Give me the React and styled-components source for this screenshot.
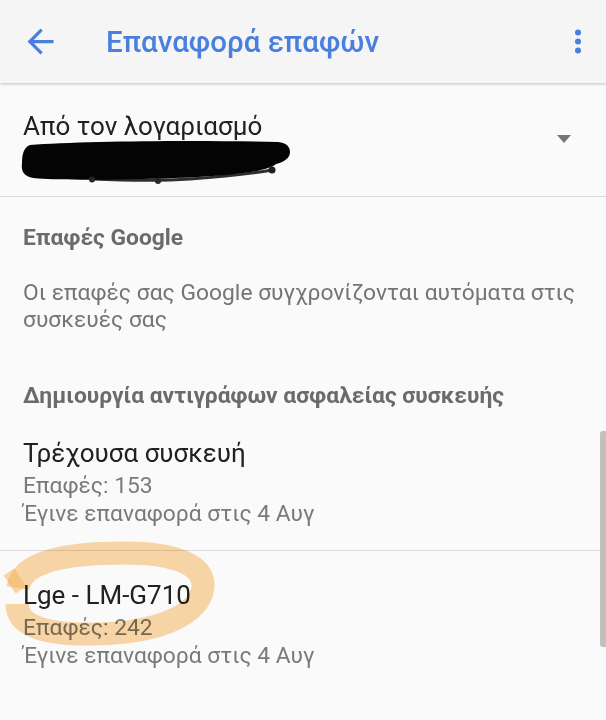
import React from 'react';
import styled, { createGlobalStyle } from 'styled-components';

const GlobalStyle = createGlobalStyle`
  html, body {
    margin: 0;
    padding: 0;
    background: #fafafa;
  }
  body {
    font-family: Roboto, "Noto Sans", "DejaVu Sans", sans-serif;
    -webkit-font-smoothing: antialiased;
  }
`;

const Screen = styled.div`
  position: relative;
  width: 606px;
  height: 720px;
  overflow: hidden;
  background: #fafafa;
`;

const AppBar = styled.header`
  position: relative;
  z-index: 2;
  display: flex;
  align-items: center;
  height: 83px;
  padding: 0 18px 0 21px;
  background: #f5f5f5;
  box-shadow: 0 1px 3px rgba(0, 0, 0, 0.14), 0 2px 2px rgba(0, 0, 0, 0.06);
  box-sizing: border-box;
`;

const IconSlot = styled.div`
  display: flex;
  align-items: center;
  justify-content: center;
  width: ${(p) => p.w}px;
  height: 40px;
`;

const Title = styled.h1`
  flex: 1;
  margin: 0 0 0 46px;
  font-size: 29.5px;
  font-weight: 500;
  color: #4b7fde;
`;

const AccountRow = styled.section`
  display: flex;
  align-items: flex-start;
  padding: 28px 35px 12px 23px;
  border-bottom: 1px solid #dcdcdc;
`;

const AccountText = styled.div`
  flex: 1;
  display: flex;
  flex-direction: column;
`;

const Primary = styled.div`
  margin-bottom: ${(p) => p.mb || 0}px;
  font-size: 26px;
  line-height: ${(p) => p.lh || 32}px;
  color: #212121;
`;

const Redaction = styled.svg`
  display: block;
  margin-left: -3px;
`;

const DropArrow = styled.div`
  margin-top: 24px;
  width: 0;
  height: 0;
  border-left: 7px solid transparent;
  border-right: 7px solid transparent;
  border-top: 8px solid #757575;
`;

const Block = styled.section`
  padding: ${(p) => p.pad};
  border-bottom: ${(p) => (p.divider ? '1px solid #dcdcdc' : 'none')};
`;

const Header = styled.div`
  font-size: 22.8px;
  font-weight: 700;
  line-height: 28px;
  color: #6b6b6b;
`;

const Body = styled.p`
  margin: 27px 0 0;
  font-size: 22.8px;
  line-height: 27px;
  color: #757575;
`;

const Secondary = styled.div`
  font-size: 22.8px;
  line-height: 28px;
  color: #7a7a7a;
`;

const ScrollThumb = styled.div`
  position: absolute;
  top: 431px;
  right: 0;
  width: 6px;
  height: 216px;
  border-radius: 3px 0 0 3px;
  background: #c3bfbf;
`;

const Highlight = styled.svg`
  position: absolute;
  left: 0;
  top: 530px;
  pointer-events: none;
  mix-blend-mode: multiply;
`;

const BackIcon = () => (
  <svg width="39" height="39" viewBox="0 0 24 24">
    <path fill="#4b7fde" d="M20 11H7.83l5.59-5.59L12 4l-8 8 8 8 1.41-1.41L7.83 13H20v-2z" />
  </svg>
);

const MoreIcon = () => (
  <svg width="10" height="30" viewBox="0 0 10 30">
    <circle cx="5" cy="5.5" r="3" fill="#4b7fde" />
    <circle cx="5" cy="14.5" r="3" fill="#4b7fde" />
    <circle cx="5" cy="23.5" r="3" fill="#4b7fde" />
  </svg>
);

const devices = [
  { name: 'Τρέχουσα συσκευή', count: 153, pad: '27px 23px 22px', divider: true },
  { name: 'Lge - LM-G710', count: 242, pad: '28px 23px 20px', divider: false },
];

export default function App() {
  return (
    <Screen>
      <GlobalStyle />
      <AppBar>
        <IconSlot w={39}>
          <BackIcon />
        </IconSlot>
        <Title>Επαναφορά επαφών</Title>
        <IconSlot w={20}>
          <MoreIcon />
        </IconSlot>
      </AppBar>

      <AccountRow>
        <AccountText>
          <Primary lh={30}>Από τον λογαριασμό</Primary>
          <Redaction width="274" height="43" viewBox="0 0 274 43">
            <path
              fill="none"
              stroke="#2e2e2e"
              strokeWidth="3"
              strokeLinecap="round"
              d="M72 38 C110 39.5 140 40 170 38 C200 36 235 32 252 29"
            />
            <path
              fill="#040404"
              d="M10 4 C60 0 180 -1 258 1 C267 2 270 6 270 11 C270 17 264 21 256 23 C246 33 180 37 123 38 C80 39 40 39 18 37.5 C3 36.5 1 30 2 22 C2 13 4 6 10 4 Z"
            />
            <circle cx="252" cy="29" r="3.5" fill="#1e1e1e" />
            <circle cx="72" cy="38.5" r="3" fill="#262626" />
            <circle cx="138" cy="40" r="3" fill="#262626" />
          </Redaction>
        </AccountText>
        <DropArrow />
      </AccountRow>

      <Block pad="27px 23px 0">
        <Header>Επαφές Google</Header>
        <Body>Οι επαφές σας Google συγχρονίζονται αυτόματα στις συσκευές σας</Body>
      </Block>

      <Block pad="49px 23px 0">
        <Header>Δημιουργία αντιγράφων ασφαλείας συσκευής</Header>
      </Block>

      {devices.map((d) => (
        <Block key={d.name} pad={d.pad} divider={d.divider}>
          <Primary mb={3}>{d.name}</Primary>
          <Secondary>Επαφές: {d.count}</Secondary>
          <Secondary>Έγινε επαναφορά στις 4 Αυγ</Secondary>
        </Block>
      ))}

      <ScrollThumb />

      <Highlight width="240" height="130" viewBox="0 0 240 130">
        <path
          fill="none"
          stroke="rgba(247, 186, 96, 0.55)"
          strokeWidth="23"
          d="M18 58 C22 30 70 23 125 23 C175 23 205 35 203 57 C200 84 160 103 95 104 C45 105 17 96 17 74"
        />
        <path
          fill="none"
          stroke="rgba(247, 186, 96, 0.55)"
          strokeWidth="13"
          d="M9 42 L21 60"
        />
      </Highlight>
    </Screen>
  );
}
